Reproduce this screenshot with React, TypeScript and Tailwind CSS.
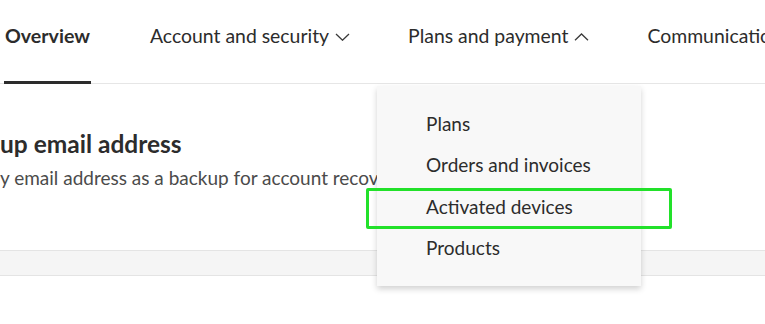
import React from "react";

const Chevron = ({ up }: { up?: boolean }) => (
  <svg width="15" height="8" viewBox="0 0 15 8" className="ml-[6px] mt-[2px]">
    <path
      d={up ? "M1 7.2 L7.5 1 L14 7.2" : "M1 1 L7.5 7.2 L14 1"}
      fill="none"
      stroke="#3a3a3a"
      strokeWidth="1.3"
    />
  </svg>
);

const menu = ["Plans", "Orders and invoices", "Activated devices", "Products"];

export default function App() {
  return (
    <div className="w-[765px] h-[324px] bg-white overflow-hidden font-['Lato',sans-serif] text-[#2c2c2c]">
      <nav className="h-[84px] flex items-stretch gap-[58px] pl-[4px] border-b border-[#e6e6e6] whitespace-nowrap">
        <div className="flex items-center px-[1px] mr-[1px] border-b-[3px] border-[#2c2c2c] -mb-[1px] text-[19.6px] font-bold pb-[9px]">
          Overview
        </div>
        <div className="flex items-center text-[19.4px] pb-[12px]">
          Account and security
          <Chevron />
        </div>
        <div className="relative flex items-center text-[19.4px] pb-[12px]">
          Plans and payment
          <Chevron up />
          <div className="absolute z-10 left-[-31px] top-[86px] w-[264px] py-[17px] bg-[#f8f8f8] shadow-[0_3px_6px_rgba(0,0,0,0.18)]">
            {menu.map((m) => (
              <div key={m} className="h-[41.5px] flex items-center pl-[49px] text-[19px] text-[#2c2c2c]">
                {m}
              </div>
            ))}
            <div className="absolute left-[-11px] top-[102px] w-[306px] h-[41px] border-[3px] border-[#22e12a] rounded-[2px]" />
          </div>
        </div>
        <div className="flex items-center text-[19.4px] pb-[12px]">Communications</div>
      </nav>
      <div className="h-[166px] flex flex-col pt-[45px] whitespace-nowrap">
        <h2 className="text-[24.5px] font-bold leading-[30px] text-[#2c2c2c]">up email address</h2>
        <p className="mt-[6px] text-[19px] leading-[26px] text-[#4b4b4b]">
          y email address as a backup for account recovery.
        </p>
      </div>
      <div className="h-[26px] bg-[#f5f5f5] border-y border-[#e4e4e4]" />
    </div>
  );
}
